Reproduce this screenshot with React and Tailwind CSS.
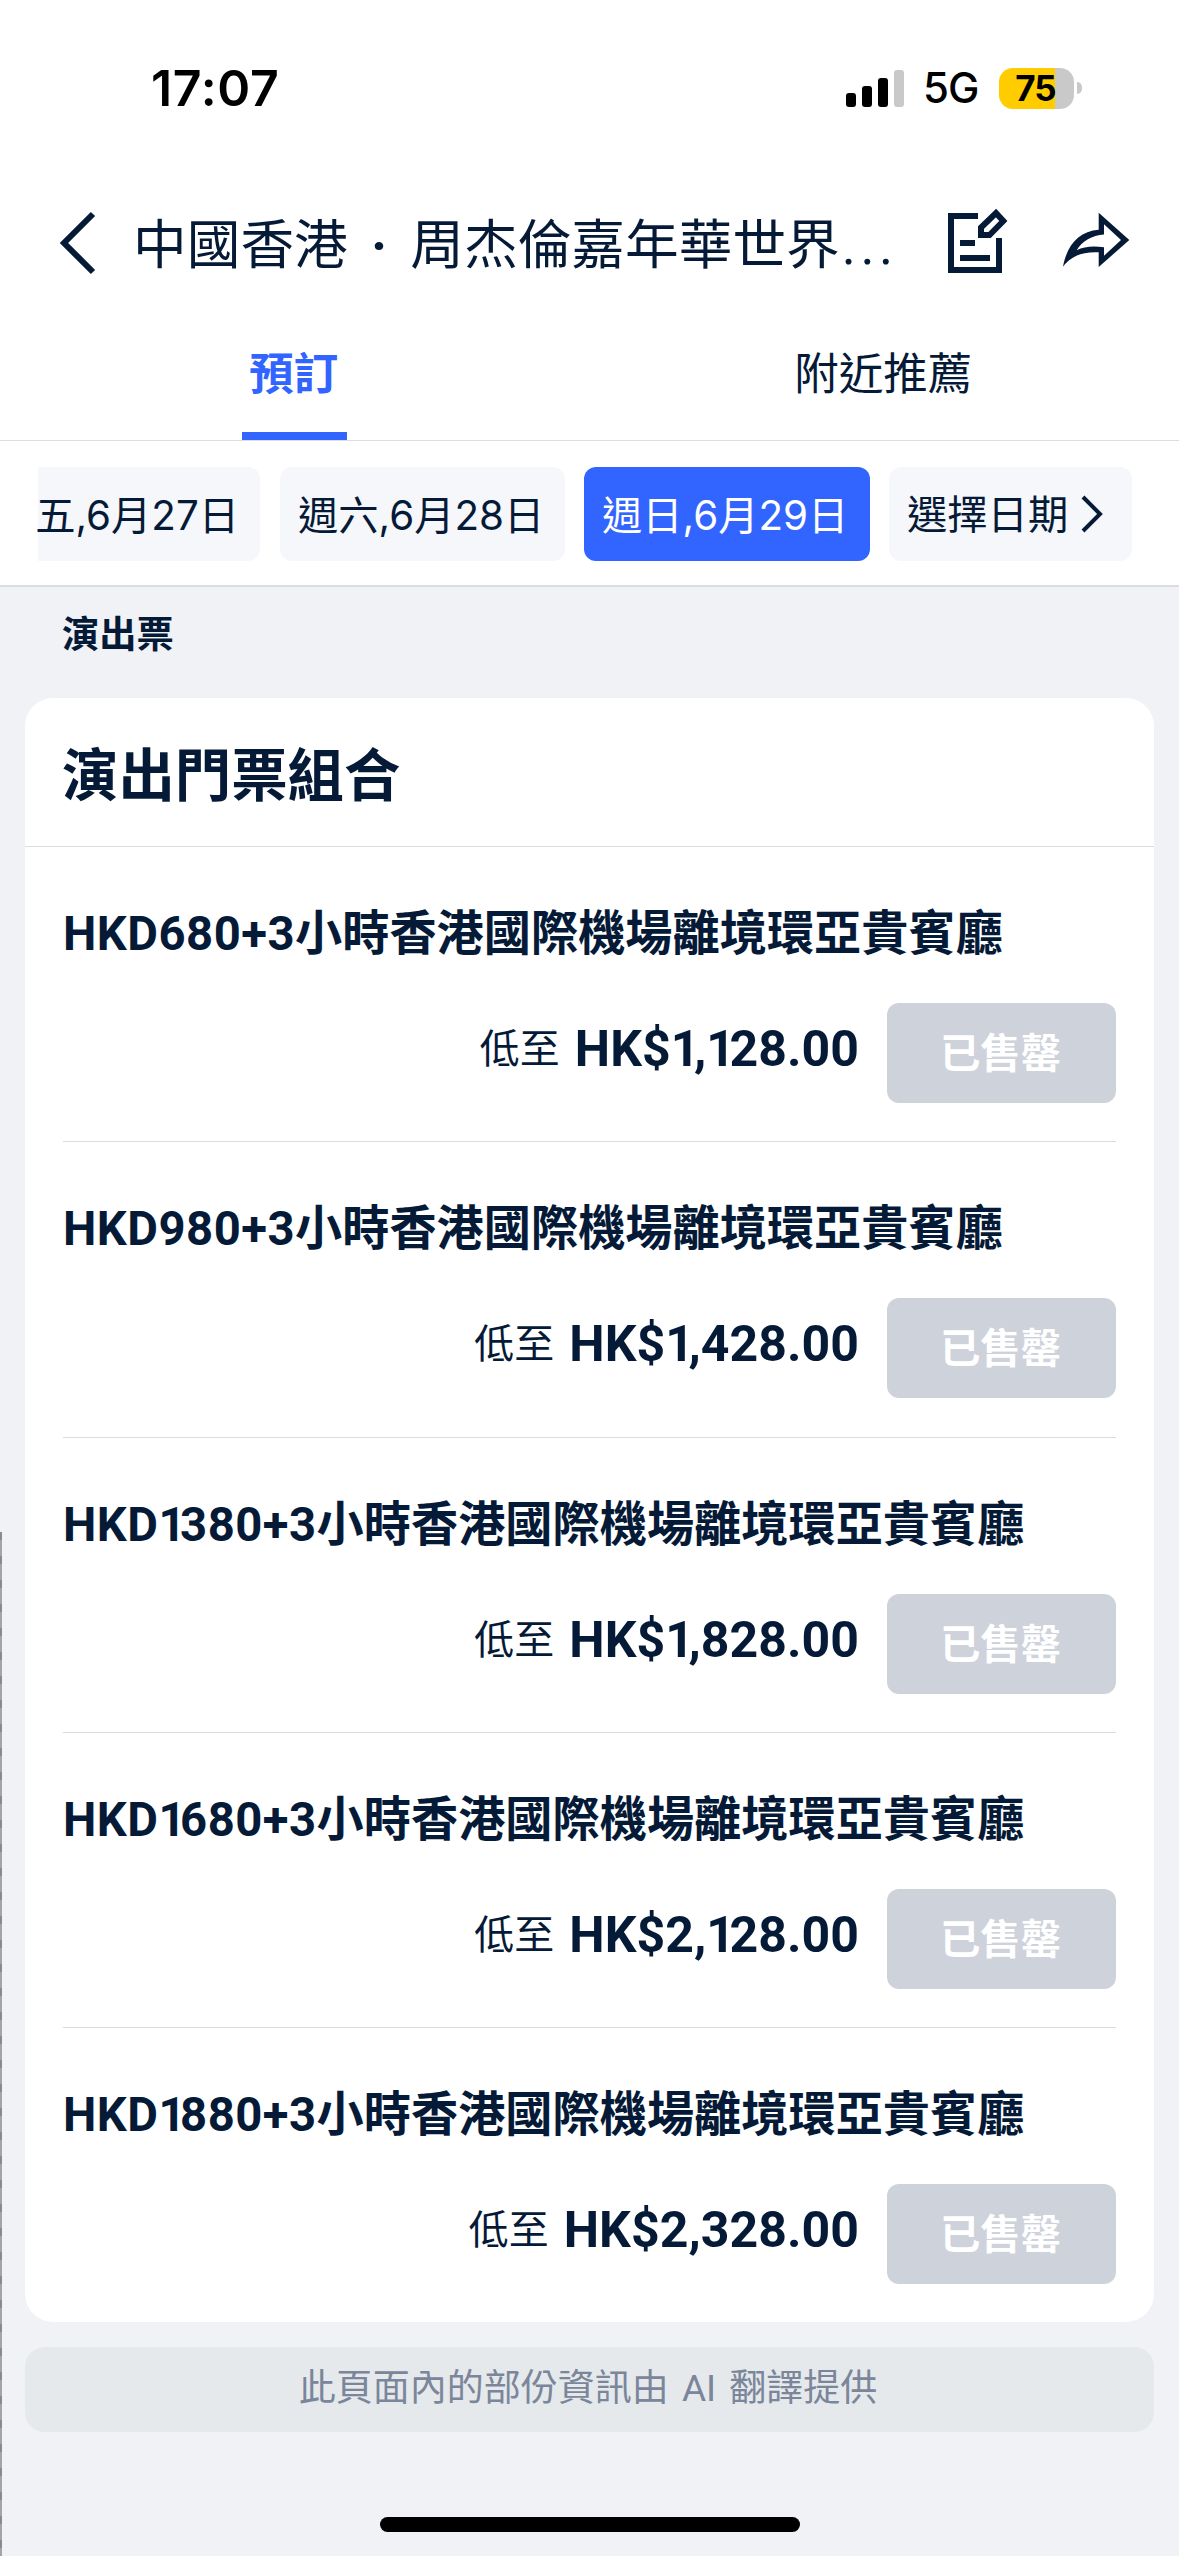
import React, { useState } from 'react'

const tickets = [
  { id: 1, code: 'HKD680+3', name: '小時香港國際機場離境環亞貴賓廳', price: 'HK$1,128.00' },
  { id: 2, code: 'HKD980+3', name: '小時香港國際機場離境環亞貴賓廳', price: 'HK$1,428.00' },
  { id: 3, code: 'HKD1380+3', name: '小時香港國際機場離境環亞貴賓廳', price: 'HK$1,828.00' },
  { id: 4, code: 'HKD1680+3', name: '小時香港國際機場離境環亞貴賓廳', price: 'HK$2,128.00' },
  { id: 5, code: 'HKD1880+3', name: '小時香港國際機場離境環亞貴賓廳', price: 'HK$2,328.00' },
]

const tabs = ['預訂', '附近推薦']

// the digit 1 is set tighter than the other digits
function Digits({ text }) {
  return text.split(/(1)/).map((part, i) => (
    <span key={i} className={part === '1' ? 'tracking-[-5.500px]' : ''}>{part}</span>
  ))
}

function StatusBar() {
  return (
    <div className="h-[176px] shrink-0 pl-[151px] pr-[97px] flex items-start justify-between text-black font-['Inter',sans-serif]">
      <span className="mt-[58px] text-[50px] leading-[60px] font-semibold tracking-[0.700px]">17:07</span>
      <div className="mt-[67px] h-[42px] flex items-center">
        <svg className="w-[60px] h-[38px]" viewBox="0 0 60 38">
          <rect x="1" y="24" width="10" height="14" rx="3" />
          <rect x="17" y="17" width="10" height="21" rx="3" />
          <rect x="33" y="9" width="10" height="29" rx="3" />
          <rect x="49" y="1" width="10" height="37" rx="3" fill="#c9c9c9" />
        </svg>
        <span className="ml-[18px] w-[76px] text-[42px] leading-[42px] font-medium tracking-[-1px]">5G</span>
        <div className="w-[75px] h-[41px] rounded-[14px] flex items-center justify-center bg-linear-to-r from-[#ffcc00] from-75% to-[#c9c9c9] to-75%">
          <span className="mr-[2px] text-[35px] leading-[41px] font-bold tracking-[-1px]">75</span>
        </div>
        <div className="ml-[3px] w-[5px] h-[12px] rounded-r-full bg-[#c9c9c9]"></div>
      </div>
    </div>
  )
}

function Header() {
  return (
    <header className="h-[136px] shrink-0 pl-[58px] pr-[48px] flex items-center">
      <svg className="w-[40px] h-[66px] mb-[2px]" viewBox="0 0 40 66" fill="none" stroke="currentColor" strokeWidth="6">
        <path d="M35 4 L6 33 L35 62" />
      </svg>
      <h1 className="ml-[35px] mt-[3px] w-[813px] text-[53.700px] leading-[70px] whitespace-nowrap">
        中國香港<span className="inline-block w-[62.500px] text-center font-bold">·</span>周杰倫嘉年華世界<span className="ml-[2px] tracking-[4.500px]">...</span>
      </h1>
      <svg className="mb-[10px] w-[64px] h-[68px]" viewBox="0 0 64 68" fill="none" stroke="currentColor" strokeWidth="6">
        <path d="M32 11 H5 V65 H53 V33" />
        <path d="M14 38 H29 M14 53 H44" />
        <path d="M50 8 L57.300 16 L43.500 30 H35 V22.500 Z" />
      </svg>
      <svg className="ml-auto mb-[8px] w-[70px] h-[60px]" viewBox="0 0 70 60" fill="currentColor">
        <path
          fillRule="evenodd"
          d="M37.700 2.700 L68.300 30 L37.700 57 V42.300 C23 41.500 11 45 2 56.700 C6 35 18 21 37.700 19.700 Z M43 14.300 V24.500 C31 25.500 21 31 15.700 40.300 C23 36.500 32 35.800 43 37.300 V45.700 L60 30 Z"
        />
      </svg>
    </header>
  )
}

function App() {
  const [activeTab, setActiveTab] = useState('預訂')

  return (
    <div className="w-[1179px] h-[2556px] overflow-hidden relative flex flex-col bg-[#f0f2f5] text-[#051a37] font-['Roboto','Noto_Sans_CJK_TC',sans-serif]">
      <div className="bg-white flex flex-col border-b-2 border-[#dadde1]">
        <StatusBar />
        <Header />

        {/* Tabs */}
        <div className="h-[129px] grid grid-cols-2 border-b border-[#dadde1]">
          {tabs.map((tab) => (
            <button
              key={tab}
              onClick={() => setActiveTab(tab)}
              className={
                activeTab === tab
                  ? 'flex flex-col items-center justify-between pt-[31px] text-[44.500px] leading-[64px] font-bold text-[#3264ff]'
                  : 'flex flex-col items-center justify-between pt-[31px] text-[44.500px] leading-[64px]'
              }
            >
              <span className="mr-[2px]">{tab}</span>
              {activeTab === tab && <span className="w-[105px] h-[8px] bg-[#3264ff]"></span>}
            </button>
          ))}
        </div>

        {/* Date picker */}
        <div className="h-[144px] pl-[38px] pt-[26px] flex items-start font-['Inter','Noto_Sans_CJK_TC',sans-serif] text-[40.300px] whitespace-nowrap">
          <div className="w-[222px] h-[94px] leading-[97px] flex justify-end rounded-r-[12px] bg-[#f5f7fa] pr-[21px]">五,6月27日</div>
          <div className="ml-[20px] w-[285px] h-[94px] leading-[97px] rounded-[12px] bg-[#f5f7fa] pl-[18px]">週六,6月28日</div>
          <div className="ml-[19px] w-[286px] h-[94px] leading-[97px] rounded-[12px] bg-[#3264ff] pl-[18px] text-white">週日,6月29日</div>
          <div className="ml-[19px] w-[243px] h-[94px] leading-[97px] rounded-[12px] bg-[#f5f7fa] pl-[18px] flex items-center">
            選擇日期
            <svg className="ml-[12px] w-[24px] h-[42px]" viewBox="0 0 24 42" fill="none" stroke="currentColor" strokeWidth="4">
              <path d="M3 4 L20 21 L3 38" />
            </svg>
          </div>
        </div>
      </div>

      <h2 className="h-[111px] pl-[62px] pt-[20px] text-[37.300px] leading-[56px] font-bold">演出票</h2>

      {/* Ticket list */}
      <section className="mx-[25px] h-[1624px] rounded-[28px] bg-white">
        <h3 className="h-[149px] pl-[37px] text-[56.400px] leading-[159px] font-bold border-b border-[#d9dce0]">演出門票組合</h3>
        <div className="px-[38px]">
          {tickets.map((ticket) => (
            <div key={ticket.id} className="h-[295.250px] border-b border-[#d9dce0] last:border-b-0">
              <div className="pt-[52px] text-[47.200px] leading-[70px] font-bold whitespace-nowrap tracking-[0]">
                <span className="tracking-[0.500px]"><Digits text={ticket.code} /></span>{ticket.name}
              </div>
              <div className="mt-[34px] flex items-start justify-end">
                <span className="mt-[11px] text-[40px] leading-[72px]">低至</span>
                <span className="ml-[15px] mt-[10px] text-[50px] leading-[72px] font-bold tracking-[0.050px]">
                  <Digits text={ticket.price} />
                </span>
                <button className="ml-[28px] w-[229px] h-[100px] rounded-[12px] bg-[#ced2da] text-white text-[40.400px] leading-[103px] font-bold">
                  <span className="mr-[2px]">已售罄</span>
                </button>
              </div>
            </div>
          ))}
        </div>
      </section>

      <p className="mx-[25px] mt-[25px] h-[85px] rounded-[20px] bg-[#e5e9ec] text-center text-[37px] leading-[84px] text-[#7b869a] [word-spacing:4px]">
        <span className="mr-[3px]">此頁面內的部份資訊由 AI 翻譯提供</span>
      </p>

      <div className="mx-auto mt-[85px] w-[420px] h-[15px] rounded-full bg-black"></div>

      {/* Edge of the underlying page */}
      <div className="absolute left-0 bottom-0 w-[2px] h-[1024px] bg-[repeating-linear-gradient(to_bottom,#8a8b8f_0_8px,#a3a4a8_8px_24px)]"></div>
    </div>
  )
}

export default App
